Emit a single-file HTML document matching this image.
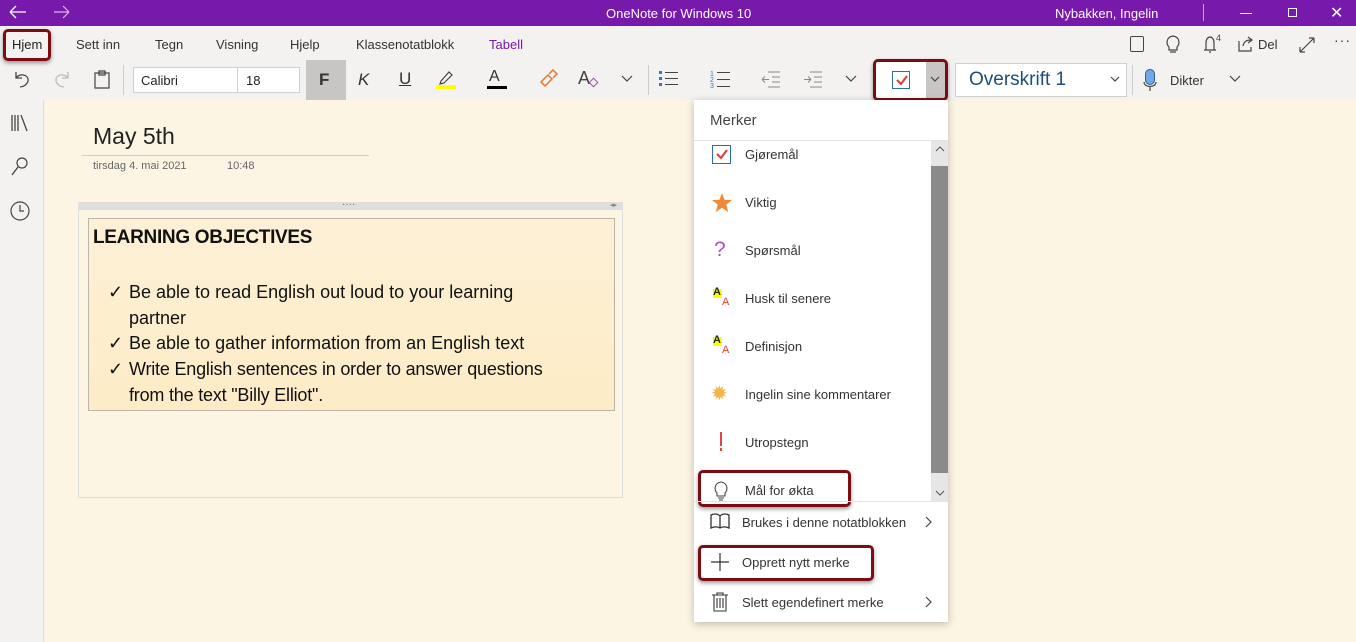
<!DOCTYPE html>
<html><head><meta charset="utf-8"><style>
*{margin:0;padding:0;box-sizing:border-box}
body{width:1356px;height:642px;overflow:hidden;position:relative;background:#fdf5e4;font-family:"Liberation Sans",sans-serif;color:#333}
.a{position:absolute}
.t{position:absolute;white-space:nowrap}
.hl{position:absolute;border:3px solid #7b0d12;border-radius:5px;box-shadow:0 2px 4px rgba(0,0,0,.4)}
svg{position:absolute}
</style></head><body>
<!-- title bar -->
<div class="a" style="left:0;top:0;width:1356px;height:26px;background:#7719aa"></div>
<svg style="left:8px;top:4px" width="20" height="16"><path d="M2 8H18M2 8L8 2M2 8L8 14" stroke="#fff" stroke-width="1.3" fill="none"/></svg>
<svg style="left:52px;top:4px" width="20" height="16"><path d="M2 8H17M17 8L11 2M17 8L11 14" stroke="#d9b8ea" stroke-width="1.2" fill="none"/></svg>
<div class="t" style="left:606px;top:6px;font-size:13px;color:#fff">OneNote for Windows 10</div>
<div class="t" style="left:1055px;top:6px;font-size:13px;color:#fff">Nybakken, Ingelin</div>
<div class="a" style="left:1203px;top:4px;width:1px;height:17px;background:#c9a3dd"></div>
<div class="a" style="left:1240px;top:13px;width:12px;height:1px;background:#fff"></div>
<div class="a" style="left:1288px;top:8px;width:9px;height:9px;border:1px solid #fff"></div>
<div class="t" style="left:1330px;top:3px;font-size:16px;color:#fff">✕</div>
<!-- tab row -->
<div class="a" style="left:0;top:26px;width:1356px;height:74px;background:#f3f2f1"></div>
<div class="t" style="left:12px;top:37px;font-size:13px;color:#222">Hjem</div>
<div class="t" style="left:76px;top:37px;font-size:13px">Sett inn</div>
<div class="t" style="left:155px;top:37px;font-size:13px">Tegn</div>
<div class="t" style="left:216px;top:37px;font-size:13px">Visning</div>
<div class="t" style="left:290px;top:37px;font-size:13px">Hjelp</div>
<div class="t" style="left:356px;top:37px;font-size:13px">Klassenotatblokk</div>
<div class="t" style="left:489px;top:37px;font-size:13px;color:#7719aa">Tabell</div>
<div class="hl" style="left:3px;top:29px;width:48px;height:32px"></div>
<!-- right icons -->
<div class="a" style="left:1130px;top:36px;width:14px;height:16px;border:1.3px solid #444;border-radius:2px"></div>
<svg style="left:1165px;top:34px" width="16" height="20"><path d="M4 13C1 10 1 3 8 2C15 3 15 10 12 13V16H4Z M5 18H11" stroke="#444" fill="none" stroke-width="1.2"/></svg>
<svg style="left:1201px;top:33px" width="22" height="22"><path d="M3 17H15M5 17V10C5 6 7 4 9 4C11 4 13 6 13 10V17M8 19H10" stroke="#444" fill="none" stroke-width="1.2"/><text x="15" y="8" font-size="9" fill="#444" font-family="Liberation Sans">4</text></svg>
<svg style="left:1237px;top:35px" width="20" height="18"><path d="M2 6V16H14V12M6 11C7 6 10 5 14 5M11 2L15 5L11 8" stroke="#444" fill="none" stroke-width="1.2"/></svg>
<div class="t" style="left:1258px;top:37px;font-size:13px">Del</div>
<svg style="left:1298px;top:36px" width="18" height="18"><path d="M2 16L16 2M2 16V11M2 16H7M16 2H11M16 2V7" stroke="#444" fill="none" stroke-width="1.2"/></svg>
<div class="t" style="left:1334px;top:32px;font-size:14px;color:#333;letter-spacing:1px">···</div>
<!-- toolbar -->
<svg style="left:11px;top:68px" width="22" height="22"><path d="M5 4V10H11M5 10C8 5 18 6 17 13C16 17 12 19 9 19" stroke="#444" fill="none" stroke-width="1.3"/></svg>
<svg style="left:51px;top:68px" width="22" height="22"><path d="M17 4V10H11M17 10C14 5 4 6 5 13C6 17 10 19 13 19" stroke="#bbb" fill="none" stroke-width="1.3"/></svg>
<svg style="left:92px;top:68px" width="20" height="22"><path d="M3 5H17V20H3Z M7 3H13V7H7Z" stroke="#444" fill="none" stroke-width="1.2"/></svg>
<div class="a" style="left:123px;top:65px;width:1px;height:30px;background:#ccc"></div>
<div class="a" style="left:133px;top:67px;width:167px;height:26px;background:#fff;border:1px solid #d0d0d0"></div>
<div class="a" style="left:237px;top:67px;width:1px;height:26px;background:#d0d0d0"></div>
<div class="t" style="left:141px;top:73px;font-size:13px;color:#222">Calibri</div>
<div class="t" style="left:246px;top:73px;font-size:13px;color:#222">18</div>
<div class="a" style="left:306px;top:60px;width:40px;height:40px;background:#c8c6c4"></div>
<div class="t" style="left:319px;top:70px;font-size:17px;font-weight:bold;color:#333">F</div>
<div class="t" style="left:358px;top:70px;font-size:17px;font-style:italic;color:#333">K</div>
<div class="t" style="left:399px;top:69px;font-size:17px;text-decoration:underline;color:#333">U</div>
<svg style="left:436px;top:68px" width="22" height="22"><path d="M5 13L13 4L16 7L8 15L4 16Z" stroke="#444" fill="none" stroke-width="1.2"/><rect x="0" y="17" width="20" height="4" fill="#ffff00"/></svg>
<div class="t" style="left:489px;top:68px;font-size:16px;color:#333">A</div>
<div class="a" style="left:487px;top:86px;width:20px;height:3px;background:#000"></div>
<svg style="left:538px;top:69px" width="22" height="20"><path d="M3 13L10 6L14 10L7 17Z M11 5L15 1L19 5L15 9" stroke="#e8762c" fill="none" stroke-width="1.5"/></svg>
<div class="t" style="left:578px;top:68px;font-size:18px;color:#444">A</div>
<div class="a" style="left:590px;top:79px;width:7px;height:7px;border:1.5px solid #a54eb5;transform:rotate(45deg)"></div>
<svg style="left:620px;top:74px" width="14" height="10"><path d="M2 2L7 7L12 2" stroke="#444" fill="none" stroke-width="1.2"/></svg>
<div class="a" style="left:648px;top:65px;width:1px;height:30px;background:#ccc"></div>
<svg style="left:658px;top:70px" width="22" height="18"><rect x="1" y="1" width="3" height="3" fill="#2b79d0"/><rect x="1" y="7" width="3" height="3" fill="#2b79d0"/><rect x="1" y="13" width="3" height="3" fill="#2b79d0"/><path d="M7 2.5H20M7 8.5H20M7 14.5H20" stroke="#444"/></svg>
<svg style="left:710px;top:69px" width="22" height="20"><text x="0" y="7" font-size="7" fill="#2b79d0" font-family="Liberation Sans">1</text><text x="0" y="13" font-size="7" fill="#2b79d0" font-family="Liberation Sans">2</text><text x="0" y="19" font-size="7" fill="#2b79d0" font-family="Liberation Sans">3</text><path d="M7 3.5H20M7 10.5H20M7 17.5H20" stroke="#444"/></svg>
<svg style="left:760px;top:70px" width="22" height="18"><path d="M8 2H20M12 7H20M12 12H20M8 17H20M9 9.5H2M2 9.5L5 6.5M2 9.5L5 12.5" stroke="#888" fill="none"/></svg>
<svg style="left:802px;top:70px" width="22" height="18"><path d="M8 2H20M12 7H20M12 12H20M8 17H20M2 9.5H9M9 9.5L6 6.5M9 9.5L6 12.5" stroke="#888" fill="none"/></svg>
<svg style="left:844px;top:74px" width="14" height="10"><path d="M2 2L7 7L12 2" stroke="#444" fill="none" stroke-width="1.2"/></svg>
<div class="a" style="left:873px;top:60px;width:74px;height:40px;background:#fff"></div>
<div class="a" style="left:926px;top:62px;width:19px;height:36px;background:#c8c6c4"></div>
<div class="a" style="left:892px;top:71px;width:18px;height:18px;border:1.3px solid #2b6ea8;background:#fff"></div>
<svg style="left:894px;top:73px" width="16" height="14"><path d="M3 7L7 11L13 3" stroke="#d83b3b" stroke-width="2" fill="none"/></svg>
<svg style="left:929px;top:75px" width="12" height="8"><path d="M2 2L6 6L10 2" stroke="#444" fill="none" stroke-width="1.2"/></svg>
<div class="hl" style="left:873px;top:59px;width:75px;height:42px"></div>
<div class="a" style="left:955px;top:63px;width:172px;height:34px;background:#fff;border:1px solid #d0d0d0"></div>
<div class="t" style="left:969px;top:69px;font-size:19px;color:#1f4e79">Overskrift 1</div>
<svg style="left:1109px;top:75px" width="12" height="8"><path d="M2 2L6 6L10 2" stroke="#444" fill="none" stroke-width="1.2"/></svg>
<div class="a" style="left:1132px;top:65px;width:1px;height:30px;background:#ccc"></div>
<div class="a" style="left:1145px;top:69px;width:10px;height:16px;background:#6fa8e6;border:1.2px solid #2b5f99;border-radius:5px"></div>
<svg style="left:1142px;top:80px" width="16" height="12"><path d="M2 2C2 8 14 8 14 2M8 7V11" stroke="#444" fill="none" stroke-width="1.2"/></svg>
<div class="t" style="left:1170px;top:73px;font-size:13px">Dikter</div>
<svg style="left:1228px;top:74px" width="14" height="10"><path d="M2 2L7 7L12 2" stroke="#444" fill="none" stroke-width="1.2"/></svg>
<!-- sidebar -->
<div class="a" style="left:0;top:100px;width:44px;height:542px;background:#f3f2f1;border-right:1px solid #ddd"></div>
<svg style="left:10px;top:113px" width="22" height="20"><path d="M2 2V18M5 2V18M8 2V18M11 2L17 18" stroke="#444" stroke-width="1.3" fill="none"/></svg>
<svg style="left:10px;top:156px" width="20" height="22"><circle cx="12" cy="7" r="5" stroke="#444" fill="none" stroke-width="1.2"/><path d="M8 11L2 19" stroke="#444" stroke-width="1.3"/></svg>
<svg style="left:9px;top:200px" width="22" height="22"><circle cx="11" cy="11" r="9" stroke="#444" fill="none" stroke-width="1.2"/><path d="M11 5V11H15" stroke="#444" fill="none" stroke-width="1.2"/></svg>
<!-- page -->
<div class="t" style="left:93px;top:123px;font-size:23px;color:#222">May 5th</div>
<div class="a" style="left:82px;top:155px;width:287px;height:1px;background:#ccc"></div>
<div class="t" style="left:93px;top:160px;font-size:11px;color:#666">tirsdag 4. mai 2021</div>
<div class="t" style="left:227px;top:160px;font-size:11px;color:#666">10:48</div>
<div class="a" style="left:78px;top:202px;width:545px;height:296px;border:1px solid #ddd"></div>
<div class="a" style="left:78px;top:202px;width:545px;height:8px;background:#dedede"></div>
<div class="t" style="left:342px;top:199px;font-size:10px;color:#666">····</div>
<div class="t" style="left:610px;top:201px;font-size:7px;color:#888">◂▸</div>
<div class="a" style="left:88px;top:218px;width:527px;height:193px;background:linear-gradient(#fdf0d6,#fdecc6);border:1px solid #bdb6a8"></div>
<div class="t" style="left:93px;top:227px;font-size:19px;font-weight:bold;color:#111;letter-spacing:-.3px">LEARNING OBJECTIVES</div>
<div style="position:absolute;left:108px;top:280px;font-size:18px;color:#111;line-height:25.7px;width:480px">
<div style="position:relative;padding-left:21px"><span style="position:absolute;left:0">✓</span>Be able to read English out loud to your learning<br>partner</div>
<div style="position:relative;padding-left:21px"><span style="position:absolute;left:0">✓</span>Be able to gather information from an English text</div>
<div style="position:relative;padding-left:21px;letter-spacing:-.2px"><span style="position:absolute;left:0">✓</span>Write English sentences in order to answer questions<br>from the text "Billy Elliot".</div>
</div>
<!-- popup -->
<div class="a" style="left:694px;top:100px;width:254px;height:522px;background:#fff;box-shadow:0 2px 8px rgba(0,0,0,.25)"></div>
<div class="t" style="left:710px;top:112px;font-size:15px;color:#444">Merker</div>
<div class="a" style="left:694px;top:140px;width:254px;height:1px;background:#e3e3e3"></div>
<div class="a" style="left:931px;top:141px;width:17px;height:360px;background:#e6e6e6"></div>
<div class="a" style="left:931px;top:166px;width:17px;height:307px;background:#8a8a8a"></div>
<svg style="left:934px;top:145px" width="12" height="8"><path d="M2 6L6 2L10 6" stroke="#555" fill="none"/></svg>
<svg style="left:934px;top:489px" width="12" height="8"><path d="M2 2L6 6L10 2" stroke="#555" fill="none"/></svg>
<div class="a" style="left:712px;top:145px;width:19px;height:19px;border:1.3px solid #2b6ea8"></div>
<svg style="left:714px;top:147px" width="16" height="14"><path d="M3 7L7 11L13 3" stroke="#d83b3b" stroke-width="2" fill="none"/></svg>
<div class="t" style="left:745px;top:147px;font-size:13px">Gjøremål</div>
<svg style="left:711px;top:192px" width="22" height="21"><path d="M11 1L13.6 7.8L21 8L15.2 12.6L17.3 20L11 15.8L4.7 20L6.8 12.6L1 8L8.4 7.8Z" fill="#f08a36"/></svg>
<div class="t" style="left:745px;top:195px;font-size:13px">Viktig</div>
<div class="t" style="left:714px;top:238px;font-size:21px;color:#b04ec7">?</div>
<div class="t" style="left:745px;top:243px;font-size:13px">Spørsmål</div>
<div class="a" style="left:713px;top:289px;width:9px;height:9px;background:#ffff00"></div>
<div class="t" style="left:713px;top:286px;font-size:11px;font-weight:bold;color:#222">A</div>
<div class="t" style="left:722px;top:296px;font-size:11px;color:#e0472c">A</div>
<div class="t" style="left:745px;top:291px;font-size:13px">Husk til senere</div>
<div class="a" style="left:713px;top:337px;width:9px;height:9px;background:#ffff00"></div>
<div class="t" style="left:713px;top:334px;font-size:11px;font-weight:bold;color:#222">A</div>
<div class="t" style="left:722px;top:344px;font-size:11px;color:#e0472c">A</div>
<div class="t" style="left:745px;top:339px;font-size:13px">Definisjon</div>
<div class="t" style="left:711px;top:381px;font-size:20px;color:#f5b547">✹</div>
<div class="t" style="left:745px;top:387px;font-size:13px">Ingelin sine kommentarer</div>
<div class="a" style="left:720px;top:432px;width:2px;height:14px;background:#e74242"></div>
<div class="a" style="left:720px;top:448px;width:2px;height:3px;background:#e74242"></div>
<div class="t" style="left:745px;top:435px;font-size:13px">Utropstegn</div>
<svg style="left:712px;top:480px" width="18" height="22"><path d="M5 13C2 10 2 3 9 2C16 3 16 10 13 13V16H5Z M6 18H12M7 20H11" stroke="#444" fill="none" stroke-width="1.1"/></svg>
<div class="t" style="left:745px;top:483px;font-size:13px">Mål for økta</div>
<div class="hl" style="left:698px;top:470px;width:153px;height:37px"></div>
<div class="a" style="left:694px;top:501px;width:254px;height:1px;background:#e3e3e3"></div>
<svg style="left:710px;top:512px" width="20" height="18"><path d="M10 4C7 1 3 2 1 3V16C3 15 7 14 10 16C13 14 17 15 19 16V3C17 2 13 1 10 4ZM10 4V16" stroke="#333" fill="none" stroke-width="1.3"/></svg>
<div class="t" style="left:742px;top:515px;font-size:13px">Brukes i denne notatblokken</div>
<svg style="left:923px;top:515px" width="10" height="14"><path d="M3 2L8 7L3 12" stroke="#444" fill="none" stroke-width="1.2"/></svg>
<svg style="left:710px;top:552px" width="20" height="20"><path d="M1 10H19M10 1V19" stroke="#333" stroke-width="1.2"/></svg>
<div class="t" style="left:742px;top:555px;font-size:13px">Opprett nytt merke</div>
<div class="hl" style="left:698px;top:545px;width:176px;height:36px"></div>
<svg style="left:711px;top:592px" width="18" height="20"><path d="M1 3H17M6 3V1H12V3M3 3V19H15V3M6 6V16M9 6V16M12 6V16" stroke="#333" fill="none" stroke-width="1.1"/></svg>
<div class="t" style="left:742px;top:595px;font-size:13px">Slett egendefinert merke</div>
<svg style="left:923px;top:595px" width="10" height="14"><path d="M3 2L8 7L3 12" stroke="#444" fill="none" stroke-width="1.2"/></svg>
</body></html>
